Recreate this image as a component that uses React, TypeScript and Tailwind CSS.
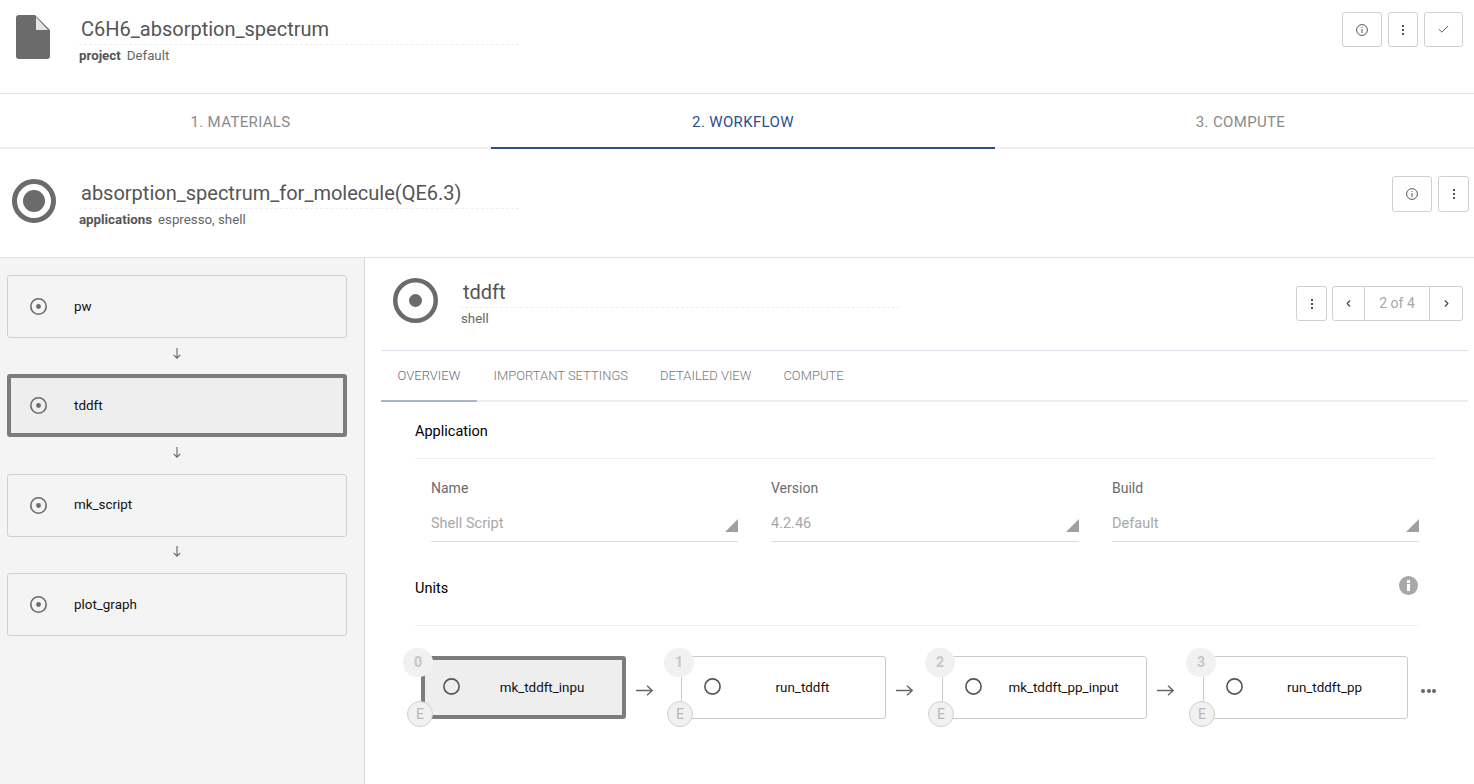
import { Check, ChevronLeft, ChevronRight } from "lucide-react";

const font = { fontFamily: "Roboto, sans-serif" };

function RadioIcon({ size, stroke, dot }: { size: number; stroke: number; dot: number }) {
  return (
    <svg width={size} height={size} viewBox={`0 0 ${size} ${size}`} className="shrink-0">
      <circle cx={size / 2} cy={size / 2} r={(size - stroke) / 2} fill="none" stroke="#6b6b6b" strokeWidth={stroke} />
      <circle cx={size / 2} cy={size / 2} r={dot} fill="#6b6b6b" />
    </svg>
  );
}

function FileIcon() {
  return (
    <svg width="34" height="44" viewBox="0 0 34 44" className="shrink-0">
      <path d="M3 0H19L34 15V41a3 3 0 0 1-3 3H3a3 3 0 0 1-3-3V3a3 3 0 0 1 3-3Z" fill="#6b6b6b" />
      <path d="M20 2 32 15H20Z" fill="#e4e4e4" />
    </svg>
  );
}

function InfoOutline() {
  return (
    <svg width="12" height="12" viewBox="0 0 12 12">
      <circle cx="6" cy="6" r="5.4" fill="none" stroke="#555" strokeWidth="1" />
      <rect x="5.5" y="5" width="1" height="4" fill="#555" />
      <rect x="5.5" y="3" width="1" height="1" fill="#555" />
    </svg>
  );
}

function Dots() {
  return (
    <span className="flex flex-col gap-[2px]">
      <span className="w-[2px] h-[2px] bg-[#555]" />
      <span className="w-[2px] h-[2px] bg-[#555]" />
      <span className="w-[2px] h-[2px] bg-[#555]" />
    </span>
  );
}

function ActionButton({ width, height, children }: { width: string; height: string; children: React.ReactNode }) {
  return (
    <div className={`flex items-center justify-center rounded-[3px] border border-[#d0d0d0] bg-white ${width} ${height}`}>
      {children}
    </div>
  );
}

function Title({ text, width, children }: { text: string; width: string; children: React.ReactNode }) {
  return (
    <div className={`flex flex-col ${width}`}>
      <div className="border-b border-dashed border-[#eeeeee] pl-[2px] h-[30px] text-[20px] leading-[28px] text-[#555555]">
        {text}
      </div>
      <div className="mt-[3px] text-[13.3px] leading-[16px] text-[#666666]">{children}</div>
    </div>
  );
}

function SubworkflowCard({ name, active }: { name: string; active?: boolean }) {
  return (
    <div
      className={`flex items-center h-[63px] rounded-[3px] ${
        active ? "border-[4px] border-[#7c7c7c] bg-[#eeeeee] pl-[19px]" : "border border-[#d0d0d0] pl-[22px]"
      }`}
    >
      <RadioIcon size={17} stroke={1.6} dot={2.4} />
      <span className="ml-[27px] pt-[0.5px] text-[13.4px] text-[#111111]">{name}</span>
    </div>
  );
}

function Connector() {
  return (
    <div className="flex items-center justify-center h-[36.33px] pb-[6px]">
      <svg width="8" height="11" viewBox="0 0 8 11">
        <path d="M4 0V10M0.7 6.8 4 10.2 7.3 6.8" fill="none" stroke="#666666" strokeWidth="1.1" />
      </svg>
    </div>
  );
}

function SelectField({ label, value, width }: { label: string; value: string; width: string }) {
  return (
    <div className={`flex flex-col ${width}`}>
      <div className="h-[20px] text-[14px] leading-[20px] text-[#6b6b6b]">{label}</div>
      <div className="mt-[8px] flex items-end justify-between h-[36px] border-b border-[#dddddd] pb-[9px]">
        <span className="text-[14.5px] leading-[20px] text-[#a8a8a8] -mb-[2px]">{value}</span>
        <svg width="13" height="13" viewBox="0 0 13 13">
          <polygon points="13,0 13,13 0,13" fill="#a0a0a0" />
        </svg>
      </div>
    </div>
  );
}

function UnitNode({ index, name, active }: { index: number; name: string; active?: boolean }) {
  return (
    <div
      className={`relative flex items-center shrink-0 h-[63px] w-[205px] rounded-[3px] ${
        active ? "border-[4px] border-[#7c7c7c] bg-[#eeeeee]" : "border border-[#cccccc] bg-white"
      }`}
    >
      <div
        className={`absolute flex items-center justify-center w-[30px] h-[29px] rounded-full bg-[#f1f1f1] text-[14px] font-bold text-[#c6c6c6] ${
          active ? "-left-[22px] -top-[12px]" : "-left-[18px] -top-[9px]"
        }`}
      >
        {index}
      </div>
      <div
        className={`absolute flex items-center justify-center w-[26px] h-[26px] rounded-full border border-[#d0d0d0] bg-[#f1f1f1] text-[14px] text-[#b8b8b8] ${
          active ? "-left-[18px] top-[41px]" : "-left-[15px] top-[44px]"
        }`}
      >
        E
      </div>
      <div className={`flex items-center w-full pb-[1px] ${active ? "pl-[18px]" : "pl-[22px]"}`}>
        <svg width="17" height="17" viewBox="0 0 17 17" className="shrink-0">
          <circle cx="8.5" cy="8.5" r="7.6" fill="none" stroke="#555555" strokeWidth="1.6" />
        </svg>
        <span className={`flex-1 text-center text-[13.4px] text-[#111111] pt-[2px] ${active ? "pl-[2px]" : "pr-[1px]"}`}>
          {name}
        </span>
      </div>
    </div>
  );
}

function UnitArrow({ width }: { width: string }) {
  return (
    <div className={`${width} shrink-0 pl-[10px] pt-[29px]`}>
      <svg width="17" height="11" viewBox="0 0 17 11">
        <path d="M0 5.5H16M11 0.7 16.2 5.5 11 10.3" fill="none" stroke="#666666" strokeWidth="1.4" />
      </svg>
    </div>
  );
}

export default function App() {
  return (
    <div className="w-[1474px] h-[784px] overflow-hidden bg-white flex flex-col" style={font}>
      <div className="flex h-[94px] shrink-0 border-b border-[#e2e2ea] pl-[16px] pr-[11px]">
        <div className="pt-[15px]">
          <FileIcon />
        </div>
        <div className="ml-[29px] pt-[15px]">
          <Title text="C6H6_absorption_spectrum" width="w-[440px]">
            <b className="font-bold text-[#555555]">project</b>
            <span className="ml-[6px]">Default</span>
          </Title>
        </div>
        <div className="ml-auto flex gap-[6px] pt-[12px]">
          <ActionButton width="w-[40px]" height="h-[35px]">
            <InfoOutline />
          </ActionButton>
          <ActionButton width="w-[30px]" height="h-[35px]">
            <Dots />
          </ActionButton>
          <ActionButton width="w-[39px]" height="h-[35px]">
            <Check size={13} color="#3f4f66" strokeWidth={1.7} />
          </ActionButton>
        </div>
      </div>

      <div className="flex h-[55px] shrink-0 border-b-2 border-[#eeeeee] pt-[3px] text-[15px] tracking-[0.35px] text-[#8a8a8a]">
        <div className="flex items-center justify-center w-[491px] pr-[10px]">1. MATERIALS</div>
        <div className="relative flex items-center justify-center w-[504px] text-[#2c4f8c]">
          2. WORKFLOW
          <div className="absolute left-0 right-0 -bottom-[2px] h-[2px] bg-[#2c4f8c]" />
        </div>
        <div className="flex items-center justify-center flex-1 pl-[12px]">3. COMPUTE</div>
      </div>

      <div className="flex h-[109px] shrink-0 border-b border-[#e2e2ea] pl-[12px] pr-[5px]">
        <div className="pt-[30px]">
          <RadioIcon size={44} stroke={5} dot={11} />
        </div>
        <div className="ml-[23px] pt-[30px]">
          <Title text="absorption_spectrum_for_molecule(QE6.3)" width="w-[440px]">
            <b className="font-bold text-[#555555]">applications</b>
            <span className="ml-[6px]">espresso, shell</span>
          </Title>
        </div>
        <div className="ml-auto flex gap-[6px] pt-[27px]">
          <ActionButton width="w-[40px]" height="h-[36px]">
            <InfoOutline />
          </ActionButton>
          <ActionButton width="w-[31px]" height="h-[36px]">
            <Dots />
          </ActionButton>
        </div>
      </div>

      <div className="flex flex-1 min-h-0">
        <div className="w-[365px] shrink-0 border-r border-[#d8d8d8] bg-[#f4f4f4] pl-[7px] pr-[17px] pt-[17px]">
          <SubworkflowCard name="pw" />
          <Connector />
          <SubworkflowCard name="tddft" active />
          <Connector />
          <SubworkflowCard name="mk_script" />
          <Connector />
          <SubworkflowCard name="plot_graph" />
        </div>

        <div className="flex-1 min-w-0 flex flex-col pl-[16px] pr-[6px]">
          <div className="flex h-[93px] shrink-0 border-b border-[#dfe3ec] pl-[12px] pr-[5px]">
            <div className="pt-[20px]">
              <RadioIcon size={45} stroke={4.5} dot={6.5} />
            </div>
            <div className="ml-[22px] pt-[20px]">
              <div className="flex flex-col w-[440px]">
                <div className="border-b border-dashed border-[#eeeeee] pl-[3px] h-[30px] text-[20px] leading-[28px] text-[#555555]">
                  tddft
                </div>
                <div className="mt-[3px] pl-[1px] text-[13.3px] leading-[16px] text-[#666666]">shell</div>
              </div>
            </div>
            <div className="ml-auto flex gap-[5px] pt-[28px]">
              <ActionButton width="w-[31px]" height="h-[35px]">
                <Dots />
              </ActionButton>
              <div className="flex h-[35px] rounded-[3px] border border-[#d0d0d0]">
                <div className="flex items-center justify-center w-[32px] border-r border-[#d0d0d0]">
                  <ChevronLeft size={11} color="#444444" strokeWidth={2.4} />
                </div>
                <div className="flex items-center justify-center w-[65px] border-r border-[#d0d0d0] text-[14px] text-[#a8a8a8]">
                  2 of 4
                </div>
                <div className="flex items-center justify-center w-[32px]">
                  <ChevronRight size={11} color="#444444" strokeWidth={2.4} />
                </div>
              </div>
            </div>
          </div>

          <div className="flex h-[51px] shrink-0 border-b-2 border-[#eeeeee] text-[13px] font-light text-[#777777]">
            <div className="relative flex items-center justify-center w-[96px] text-[#5f6d88]">
              OVERVIEW
              <div className="absolute left-0 right-0 -bottom-[2px] h-[2px] bg-[#abb5c9]" />
            </div>
            <div className="flex items-center pl-[16.5px] pr-[16px]">IMPORTANT SETTINGS</div>
            <div className="flex items-center px-[16px]">DETAILED VIEW</div>
            <div className="flex items-center px-[16px]">COMPUTE</div>
          </div>

          <div className="flex flex-col pl-[34px] pr-[33px]">
            <div className="flex items-center h-[57px] border-b border-[#eeeeee] pt-[4px] text-[14.5px] text-[#000000]">
              Application
            </div>
            <div className="flex gap-[33px] pl-[16px] pr-[16px] pt-[19px]">
              <SelectField label="Name" value="Shell Script" width="w-[307px]" />
              <SelectField label="Version" value="4.2.46" width="w-[308px]" />
              <SelectField label="Build" value="Default" width="w-[307px]" />
            </div>
            <div className="flex items-center justify-between h-[84px] mr-[16px] border-b border-[#eeeeee] pt-[10px] text-[14.5px] text-[#000000]">
              Units
              <svg width="19" height="19" viewBox="0 0 19 19" className="mr-[1px] -mt-[6px]">
                <circle cx="9.5" cy="9.5" r="9.5" fill="#a8a8a8" />
                <rect x="8" y="8" width="3" height="7" fill="#ffffff" />
                <rect x="8" y="4" width="3" height="3" fill="#ffffff" />
              </svg>
            </div>
            <div className="flex items-start ml-[6px] pt-[30px]">
              <UnitNode index={0} name="mk_tddft_inpu" active />
              <UnitArrow width="w-[55px]" />
              <UnitNode index={1} name="run_tddft" />
              <UnitArrow width="w-[56px]" />
              <UnitNode index={2} name="mk_tddft_pp_input" />
              <UnitArrow width="w-[56px]" />
              <UnitNode index={3} name="run_tddft_pp" />
              <div className="flex shrink-0 gap-[1.5px] ml-[13px] mt-[33px]">
                <span className="w-[4px] h-[4px] rounded-full bg-[#666666]" />
                <span className="w-[4px] h-[4px] rounded-full bg-[#666666]" />
                <span className="w-[4px] h-[4px] rounded-full bg-[#666666]" />
              </div>
            </div>
          </div>
        </div>
      </div>
    </div>
  );
}
